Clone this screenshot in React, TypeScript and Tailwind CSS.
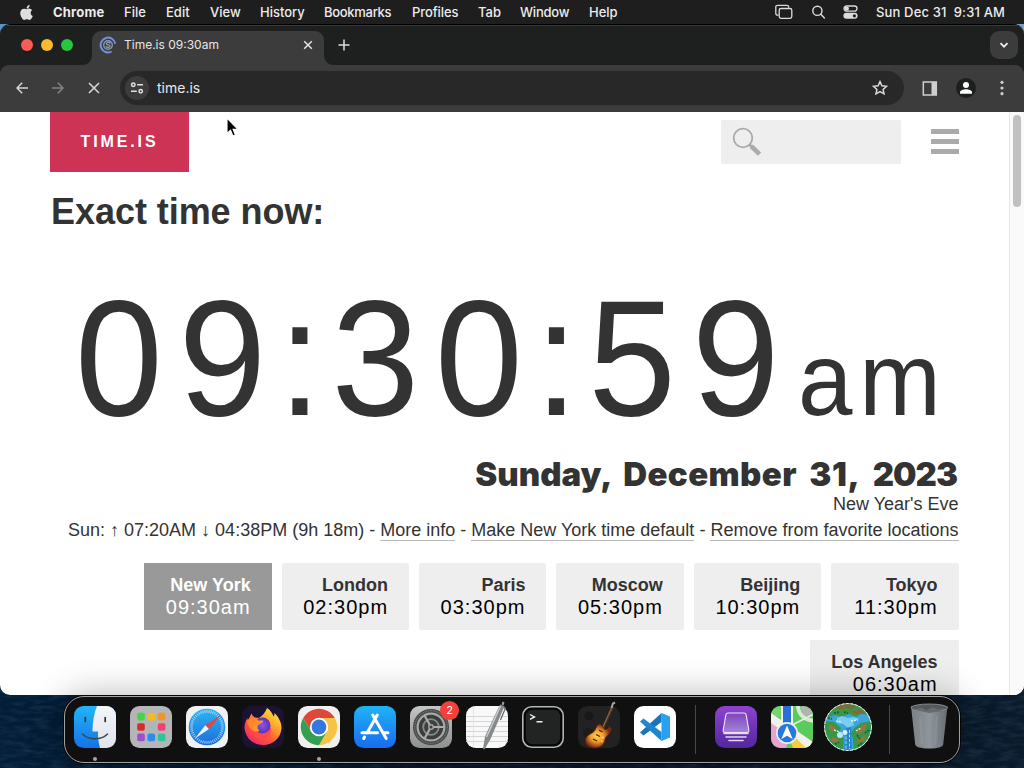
import React from "react";
import { FaApple } from "react-icons/fa";

const menuItems: { label: string; cls: string }[] = [
  { label: "Chrome", cls: "w-[71px] font-bold tracking-[0.2px]" },
  { label: "File", cls: "w-[42px] font-medium" },
  { label: "Edit", cls: "w-[44px] font-medium" },
  { label: "View", cls: "w-[50px] font-medium" },
  { label: "History", cls: "w-[64px] font-medium" },
  { label: "Bookmarks", cls: "w-[88px] font-medium tracking-[-0.3px]" },
  { label: "Profiles", cls: "w-[66px] font-medium tracking-[-0.1px]" },
  { label: "Tab", cls: "w-[42px] font-medium" },
  { label: "Window", cls: "w-[69px] font-medium tracking-[-0.2px]" },
  { label: "Help", cls: "w-[40px] font-medium" },
];

const cities = [
  { name: "London", time: "02:30pm" },
  { name: "Paris", time: "03:30pm" },
  { name: "Moscow", time: "05:30pm" },
  { name: "Beijing", time: "10:30pm" },
  { name: "Tokyo", time: "11:30pm" },
];

function MenuBar() {
  return (
    <header className="flex h-6 items-center bg-[#1e1e1e] font-['Inter',sans-serif] text-[13px] leading-6 text-[#ececec]">
      <div className="w-[53px] pl-[19px]">
        <FaApple className="h-[17px] w-[15px] text-[#dedede]" />
      </div>
      {menuItems.map((m) => (
        <div key={m.label} className={`whitespace-nowrap ${m.cls}`}>
          {m.label}
        </div>
      ))}
      <div className="ml-auto flex items-center">
        <svg className="mr-[19px] h-4 w-[18px]" viewBox="0 0 18 16" fill="none" stroke="#dcdcdc" strokeWidth="1.3">
          <path d="M3.6 11.2H2.6A1.8 1.8 0 0 1 .8 9.4V3.1a1.8 1.8 0 0 1 1.8-1.8h9.3a1.8 1.8 0 0 1 1.8 1.8v.6" />
          <rect x="4.2" y="4.5" width="12.6" height="9.8" rx="1.8" />
        </svg>
        <svg className="mr-[18px] h-[14px] w-[13px]" viewBox="0 0 13 14" fill="none" stroke="#dcdcdc" strokeWidth="1.4">
          <circle cx="5.4" cy="5.8" r="4.6" />
          <path d="M8.8 9.2l3.6 3.7" strokeLinecap="round" />
        </svg>
        <svg className="mr-[18px] h-[14px] w-[15px]" viewBox="0 0 15 14">
          <rect x="1" y="1" width="13" height="5.2" rx="2.6" fill="none" stroke="#dcdcdc" strokeWidth="1.3" />
          <circle cx="3.8" cy="3.6" r="2.2" fill="#dcdcdc" />
          <rect x=".4" y="7.8" width="14.2" height="6" rx="3" fill="#dcdcdc" />
          <circle cx="11.4" cy="10.8" r="1.6" fill="#1e1e1e" />
        </svg>
        <div className="w-[148px] whitespace-pre font-medium tracking-[0.150px]">Sun Dec 31  9:31 AM</div>
      </div>
    </header>
  );
}

function TabStrip() {
  return (
    <div className="flex h-10 items-end bg-[#1e1f1f] shadow-[inset_0_1px_0_#3a3a3a]">
      <div className="flex h-10 w-[92px] items-center gap-2 pl-[21px]">
        <span className="size-3 rounded-full bg-[#fb5a55]" />
        <span className="size-3 rounded-full bg-[#f6bb30]" />
        <span className="size-3 rounded-full bg-[#27c640]" />
      </div>
      <div className="relative flex h-[34px] w-[232px] items-center rounded-t-[9px] bg-[#3c3c3c] pb-[6px] pl-[7px]">
        <svg className="absolute bottom-0 -left-[9px] size-[9px]" viewBox="0 0 9 9">
          <path d="M9 0v9H0a9 9 0 0 0 9-9z" fill="#3c3c3c" />
        </svg>
        <svg className="absolute -right-[9px] bottom-0 size-[9px]" viewBox="0 0 9 9">
          <path d="M0 0v9h9a9 9 0 0 1-9-9z" fill="#3c3c3c" />
        </svg>
        <svg className="h-[18px] w-[18px]" viewBox="0 0 18 18" fill="none">
          <path d="M12.600 15.500A7.400 7.400 0 1 1 16.300 7.800" stroke="#6f93dc" strokeWidth="2" />
          <circle cx="9" cy="9" r="4.300" stroke="#8797b3" strokeWidth="1.400" />
          <path d="M11.500 7.300c-1-1.300-4.200-1-4.200.4 0 1.600 3.800.8 3.800 2.500 0 1.500-3.300 1.600-4.500.2" stroke="#93a0b6" strokeWidth="1.200" />
        </svg>
        <span className="ml-[7px] font-['Inter',sans-serif] text-[12px] leading-4 whitespace-nowrap text-[#e6e6e6]">Time.is 09:30am</span>
        <svg className="mr-[11px] ml-auto size-[10px]" viewBox="0 0 10 10" stroke="#e4e4e4" strokeWidth="1.5">
          <path d="M1.200 1.200l7.600 7.600M8.800 1.200L1.200 8.800" />
        </svg>
      </div>
      <svg className="mb-[14px] ml-[14px] size-3" viewBox="0 0 12 12" stroke="#dedede" strokeWidth="1.5">
        <path d="M6 .5v11M.5 6h11" />
      </svg>
      <div className="mr-[6px] mb-[6px] ml-auto flex size-7 items-center justify-center rounded-[9px] bg-[#3c3c3c]">
        <svg className="size-[10px]" viewBox="0 0 10 10" fill="none" stroke="#f0f0f0" strokeWidth="1.7">
          <path d="M1.500 3.200L5 6.700l3.500-3.500" />
        </svg>
      </div>
    </div>
  );
}

function Toolbar() {
  return (
    <div className="bg-[#1e1f1f]">
      <div className="flex h-[47px] items-center rounded-t-[9px] bg-[#3c3c3c] pb-px">
        <svg className="ml-4 size-3" viewBox="0 0 12 12" fill="none" stroke="#d6d6d6" strokeWidth="1.500">
          <path d="M12 6H1M6.200.8L1 6l5.200 5.200" />
        </svg>
        <svg className="ml-6 size-3" viewBox="0 0 12 12" fill="none" stroke="#838383" strokeWidth="1.500">
          <path d="M0 6h11M5.800.8L11 6l-5.200 5.200" />
        </svg>
        <svg className="ml-6 size-3" viewBox="0 0 12 12" fill="none" stroke="#d6d6d6" strokeWidth="1.600">
          <path d="M1 1l10 10M11 1L1 11" />
        </svg>
        <div className="ml-5 flex h-[34px] w-[784px] items-center rounded-full bg-[#282828] pl-[5px]">
          <div className="flex size-6 items-center justify-center rounded-full bg-[#3c3c3c]">
            <svg className="size-[14px]" viewBox="0 0 14 14" fill="none" stroke="#e2e2e2" strokeWidth="1.500">
              <circle cx="3.300" cy="3.800" r="1.700" />
              <path d="M7.200 3.800h5.800M1 10.200h5.800" />
              <circle cx="10.700" cy="10.200" r="1.700" />
            </svg>
          </div>
          <span className="ml-2 font-['Inter',sans-serif] text-[14px] leading-5 text-[#e8e8e8]">time.is</span>
          <svg className="mr-4 ml-auto size-4" viewBox="0 0 16 16" fill="none" stroke="#d8d8d8" strokeWidth="1.500">
            <path d="M8 1.600l1.900 4.200 4.600.5-3.400 3.100.9 4.500-4-2.300-4 2.300.9-4.500L1.500 6.300l4.600-.5z" />
          </svg>
        </div>
        <svg className="ml-[18px] h-[15px] w-4" viewBox="0 0 16 15">
          <rect x="1.300" y="1" width="13" height="13" fill="none" stroke="#cfcfcf" strokeWidth="1.500" />
          <rect x="9.500" y="1" width="5" height="13" fill="#cfcfcf" />
        </svg>
        <div className="ml-[18px] flex size-5 items-center justify-center rounded-full bg-[#1d1e1e]">
          <svg className="size-[14px]" viewBox="0 0 14 14" fill="#fff">
            <circle cx="7" cy="4" r="3" />
            <path d="M1 12.700v-1.500C1 9.300 4.500 8.300 7 8.300s6 1 6 2.900v1.500z" />
          </svg>
        </div>
        <svg className="ml-6 h-4 w-1" viewBox="0 0 4 16" fill="#d0d0d0">
          <circle cx="2" cy="2.300" r="1.600" />
          <circle cx="2" cy="8" r="1.600" />
          <circle cx="2" cy="13.700" r="1.600" />
        </svg>
      </div>
    </div>
  );
}

function CityCard({ name, time, active, wide }: { name: string; time: string; active?: boolean; wide?: boolean }) {
  return (
    <div
      className={`h-[67px] pt-[11px] pr-[21px] text-right ${wide ? "w-[149px]" : "w-[127.400px]"} ${
        active ? "bg-[#999] text-white" : "rounded-[2px] bg-[#eee] text-black"
      }`}
    >
      <div className={`text-[18px] leading-[22px] font-bold ${active ? "text-white" : "text-[#333]"}`}>{name}</div>
      <div className="text-[20px] leading-[22px] tracking-[1px]">{time}</div>
    </div>
  );
}

function Page() {
  return (
    <div className="flex h-[583px] overflow-hidden rounded-b-[10px] bg-white">
      <main className="w-[1009px] pr-[50px] pl-[50px] font-['Liberation_Sans',Arial,sans-serif] text-[#333]">
        <div className="flex h-[60px] items-start">
          <div className="flex h-[60px] w-[139px] items-center justify-center bg-[#cc3355] text-[16px] font-bold tracking-[2.900px] text-white">
            TIME.IS
          </div>
          <div className="mt-2 ml-auto h-11 w-[180px] rounded-[2px] bg-[#eee] pt-[7px] pl-[11px]">
            <svg className="size-[30px]" viewBox="0 0 30 30" fill="none" stroke="#aaa">
              <circle cx="11" cy="11" r="9.300" strokeWidth="1.800" />
              <path d="M17.500 17.500l2.500 2.500" strokeWidth="2.500" />
              <path d="M19.300 19.300l8.300 7.800" strokeWidth="4.600" />
            </svg>
          </div>
          <div className="mt-[17px] ml-[30px] flex w-7 flex-col gap-[5px]">
            <span className="h-[5px] bg-[#aaa]" />
            <span className="h-[5px] bg-[#aaa]" />
            <span className="h-[5px] bg-[#aaa]" />
          </div>
        </div>
        <h1 className="mt-[18px] h-[44px] pl-px text-[36px] leading-[44px] font-bold tracking-[-0.050px]">Exact time now:</h1>
        <div className="mt-[24px] h-[199px] pl-[25px]">
          <div className="origin-left scale-x-[0.95] text-[166px] leading-[200px] tracking-[16.650px] whitespace-nowrap">
            0<span className="tracking-[12.300px]">9</span>
            <span className="tracking-[10.350px]">:</span>3<span className="tracking-[12.300px]">0</span>
            <span className="tracking-[10.350px]">:</span>59
            <span className="ml-[3px] text-[103px] tracking-[7px]">am</span>
          </div>
        </div>
        <div className="text-right">
          <div className="h-[34px] pr-[2px] font-['Inter',sans-serif] text-[33px] leading-[34px] font-black [word-spacing:5.800px] whitespace-nowrap">
            Sunday, <span className="tracking-[0.400px]">December</span> <span className="tracking-[0.600px]">31,</span>{" "}
            <span className="tracking-[-1px]">2023</span>
          </div>
          <div className="h-[26px] pr-[0.500px] text-[18px] leading-[26px]">New Year's Eve</div>
          <div className="h-[26px] text-[18px] leading-[26px] whitespace-nowrap">
            Sun: ↑ 07:20AM ↓ 04:38PM (9h 18m) - <a className="border-b border-[#bbb]">More info</a> -{" "}
            <a className="border-b border-[#bbb]">Make New York time default</a> -{" "}
            <a className="border-b border-[#bbb] pr-[0.500px]">Remove from favorite locations</a>
          </div>
        </div>
        <div className="mt-5 flex flex-wrap justify-end gap-[10px] pr-[0.400px]">
          <CityCard name="New York" time="09:30am" active />
          {cities.map((c) => (
            <CityCard key={c.name} name={c.name} time={c.time} />
          ))}
          <CityCard name="Los Angeles" time="06:30am" wide />
        </div>
      </main>
      <div className="w-[15px] border-l border-[#e8e8e8] bg-[#fafafa] pt-[3px] pl-[3px]">
        <div className="h-[92px] w-2 rounded-full bg-[#c1c1c1]" />
      </div>
    </div>
  );
}

function Tile({ children, dot }: { children: React.ReactNode; dot?: boolean }) {
  return (
    <div className="flex w-[42px] flex-col items-center">
      <svg className="size-[42px] shrink-0 overflow-visible" viewBox="0 0 42 42">
        {children}
      </svg>
      {dot && <span className="mt-[9px] size-1 rounded-full bg-[#a5a5a5]" />}
    </div>
  );
}

const launchColors = ["#45d443", "#f3b926", "#ee952b", "#d92b2b", "#a9b8b2", "#ee4372", "#9c4fd0", "#2e8bea", "#30c49b"];
const safariTicks = Array.from({ length: 48 }, (_, i) => i * 7.5);

function Gradients() {
  return (
    <svg className="absolute size-0">
      <defs>
        <linearGradient id="finder" x2="0" y2="1">
          <stop stopColor="#23b5f8" />
          <stop offset="1" stopColor="#1473e8" />
        </linearGradient>
        <linearGradient id="finderLight" x2="0" y2="1">
          <stop stopColor="#f4f5f8" />
          <stop offset="1" stopColor="#dfe3ec" />
        </linearGradient>
        <linearGradient id="safari" x2="0" y2="1">
          <stop stopColor="#2fb4f2" />
          <stop offset="1" stopColor="#1d6edb" />
        </linearGradient>
        <linearGradient id="foxBody" x1="1" y1="0" x2=".2" y2="1">
          <stop stopColor="#fff04e" />
          <stop offset=".35" stopColor="#ffb12e" />
          <stop offset=".65" stopColor="#ff5a35" />
          <stop offset="1" stopColor="#f0246c" />
        </linearGradient>
        <linearGradient id="foxHead" x2="1" y2="1">
          <stop stopColor="#ff7a2a" />
          <stop offset="1" stopColor="#ffa32e" />
        </linearGradient>
        <radialGradient id="foxGlobe">
          <stop stopColor="#8b52f0" />
          <stop offset="1" stopColor="#5a33b8" />
        </radialGradient>
        <linearGradient id="store" x2="0" y2="1">
          <stop stopColor="#1fb4f8" />
          <stop offset="1" stopColor="#1a6bec" />
        </linearGradient>
        <linearGradient id="prefs" x2="0" y2="1">
          <stop stopColor="#c4c6c4" />
          <stop offset="1" stopColor="#8e908e" />
        </linearGradient>
        <linearGradient id="purple" x2="0" y2="1">
          <stop stopColor="#8d43d0" />
          <stop offset="1" stopColor="#51289e" />
        </linearGradient>
        <linearGradient id="drive" x2="0" y2="1">
          <stop stopColor="#7d45bb" />
          <stop offset="1" stopColor="#a585da" />
        </linearGradient>
        <radialGradient id="guitar" cx=".45" cy=".5">
          <stop stopColor="#ffd84e" />
          <stop offset=".5" stopColor="#f39a2c" />
          <stop offset="1" stopColor="#7c2a10" />
        </radialGradient>
        <linearGradient id="bin" x2="1" y2="0">
          <stop stopColor="#7b8185" />
          <stop offset=".5" stopColor="#8e959b" />
          <stop offset="1" stopColor="#666c71" />
        </linearGradient>
        <clipPath id="tileClip">
          <rect width="42" height="42" rx="9.500" />
        </clipPath>
        <clipPath id="globeClip">
          <circle cx="21" cy="21" r="23" />
        </clipPath>
      </defs>
    </svg>
  );
}

function Dock() {
  return (
    <div className="absolute top-[696px] left-[64px] flex h-[67px] w-[896px] gap-[14px] rounded-[20px] border border-[#a2a2a2] bg-[#101010] pt-[9px] pl-[9px] shadow-[0_0_0_1px_#050505,0_0_36px_rgba(0,0,0,0.3)]">
      <Gradients />
      <Tile dot>
        <rect width="42" height="42" rx="9.500" fill="url(#finder)" />
        <path d="M23 0h9.500a9.500 9.500 0 0 1 9.500 9.500v23a9.500 9.500 0 0 1-9.500 9.500H26c-1.500-5-2.200-11-2-16.500h-5.500C18.500 16 20 7.500 23 0z" fill="url(#finderLight)" />
        <path d="M11.300 11.500v4M31.200 11.500v4" stroke="#24323f" strokeWidth="1.700" strokeLinecap="round" />
        <path d="M8.500 28c6.500 6.500 18.500 6.500 25 0" fill="none" stroke="#394b50" strokeWidth="1.600" strokeLinecap="round" />
      </Tile>
      <Tile>
        <rect width="42" height="42" rx="9.500" fill="#b5b4b7" />
        {launchColors.map((c, i) => (
          <rect key={c} x={7.2 + (i % 3) * 10.3} y={6.8 + Math.floor(i / 3) * 10.4} width="7.600" height="7.600" rx="1.800" fill={c} />
        ))}
      </Tile>
      <Tile>
        <rect width="42" height="42" rx="9.500" fill="#f0f1f2" />
        <circle cx="21" cy="21" r="18.300" fill="url(#safari)" />
        {safariTicks.map((a) => (
          <path key={a} d="M21 4.200v2.600" stroke="#d9ecfb" strokeWidth=".7" transform={`rotate(${a} 21 21)`} />
        ))}
        <path d="M35 9L19.300 19.200l3.600 3.800z" fill="#e8433f" />
        <path d="M9 32.500L19.300 19.200l3.600 3.800z" fill="#f1f3f5" />
      </Tile>
      <Tile>
        <rect width="42" height="42" rx="9.500" fill="#1c1232" />
        <path
          d="M25 2c3.500 2 5.500 5.500 6.500 8.500 1-.8 1-2 .8-3.500C37 11 39.500 17 39.500 22 39 32 31 39 21 39S3 31.500 2.500 21.500c0-4 1.500-7 2.800-9.500.2 1.200.4 2 .9 2.600C7 12 8.500 9 9.500 7.500 11 11 13 12 17 12c3-2 6-5 8-10z"
          fill="url(#foxBody)"
        />
        <circle cx="20.500" cy="19.500" r="8" fill="url(#foxGlobe)" />
        <path d="M5 15C8 10 15 11.500 16 14.500h5.500c-.4 2.200-3 3-4.700 4.200-1.800 1.300-1.800 3.800.7 6.300-4 2-11-1-12.500-10z" fill="url(#foxHead)" />
        <path d="M8 22c2 6 9 8 14 5.500 4-1 6-3.500 6.500-6.500 2 5-1 11-7 12S9 29 8 22z" fill="#ff4a48" />
      </Tile>
      <Tile dot>
        <rect width="42" height="42" rx="9.500" fill="#f1f0ee" />
        <path d="M21 11.900h15.760A18.200 18.200 0 0 0 5.240 11.900L13.100 25.500z" fill="#df4738" />
        <path d="M28.900 25.500L21 39.200A18.200 18.200 0 0 0 36.760 11.900H21z" fill="#f6c343" />
        <path d="M13.100 25.500L5.240 11.900A18.200 18.200 0 0 0 21 39.200l7.900-13.700z" fill="#34a052" />
        <circle cx="21" cy="21" r="9.200" fill="#fff" />
        <circle cx="21" cy="21" r="7.400" fill="#3577de" />
      </Tile>
      <Tile>
        <rect width="42" height="42" rx="9.500" fill="url(#store)" />
        <g stroke="#fff" strokeWidth="3" strokeLinecap="round">
          <path d="M23.300 9L13 27M10.500 31l-.8 1.500M18.700 9l13.500 23.500M8 26.800h15.500M28.800 26.800H34" />
        </g>
      </Tile>
      <div className="relative">
        <Tile>
          <rect width="42" height="42" rx="9.500" fill="url(#prefs)" />
          <circle cx="21" cy="21" r="18" fill="#454847" />
          <circle cx="21" cy="21" r="16.300" fill="none" stroke="#777b79" strokeWidth="1.200" strokeDasharray="1 .7" />
          <circle cx="21" cy="21" r="13.400" fill="#3a3d3c" stroke="#a5a8a6" strokeWidth="2.200" />
          <circle cx="21" cy="21" r="7.800" fill="#3d403f" stroke="#868a88" strokeWidth="1.800" />
          <path d="M21 21L14.500 9.500M21 21h13.200M21 21l-6.500 11.500" stroke="#a9adab" strokeWidth="2.200" />
          <circle cx="21" cy="21" r="3" fill="#a0a4a2" />
          <circle cx="21" cy="21" r="1.500" fill="#3b3e3d" />
        </Tile>
        <span className="absolute -top-[5px] -right-[7px] flex size-[19px] items-center justify-center rounded-full bg-[#f2413c] font-['Inter',sans-serif] text-[11px] leading-none text-white">2</span>
      </div>
      <Tile>
        <rect width="42" height="42" rx="9.500" fill="#f8f8f8" />
        <path d="M0 10.500h42M0 15.500h42M0 20.500h42M0 25.500h42M0 30.500h42M0 35.500h42" stroke="#cbcccd" strokeWidth=".8" />
        <path d="M7.500 0v42" stroke="#dedede" strokeWidth=".7" />
        <path d="M34 -1.500l4.500 1.700L24.500 33l-6 10.500-1.500-1 2.200-12.500z" fill="#85898b" />
        <path d="M34.500 0L20.500 31" stroke="#c9cccd" strokeWidth="1.500" />
        <path d="M35.500 -1.500l1-3 2 .8-1 3.200z" fill="#9b9fa1" />
        <path d="M38 1l1.500 1-5 12" fill="none" stroke="#5f6365" strokeWidth="1.200" />
      </Tile>
      <Tile>
        <rect x=".8" y=".8" width="40.400" height="40.400" rx="9" fill="#050505" stroke="#b4b6b6" strokeWidth="1.600" />
        <rect x="3.800" y="3.800" width="34.400" height="34.400" rx="6.500" fill="#212423" />
        <path d="M8 8.500l4.500 2.400L8 13.300M14.500 15.800h6" fill="none" stroke="#f0f0f0" strokeWidth="1.400" />
      </Tile>
      <Tile>
        <rect width="42" height="42" rx="9.500" fill="#222" />
        <circle cx="11" cy="10" r="4.500" fill="#191919" />
        <circle cx="10" cy="27" r="5" fill="#1b1b1b" />
        <path d="M24 24L34.500 1" stroke="#54301f" strokeWidth="2.800" />
        <path d="M33.500 2l1.500-4.500 2-1" fill="none" stroke="#aaa39b" strokeWidth="2" />
        <path d="M24.500 22L33.500 2" stroke="#ac8d70" strokeWidth=".7" />
        <path d="M20 18.500c-2 1.500-2 5-4 7-2.500 2.500-7.500 3-8.500 8-1 5 3.500 8.500 9 8.500 7 0 10-4 10.500-8.500.5-3.500 4.500-4.500 6-8.500 1-3-.5-4.500-2-4.500 0 2-3 3.500-4.500 2.500-2-1.500-3.500-6.500-6.500-4.500z" fill="url(#guitar)" stroke="#571c0c" strokeWidth=".8" />
        <path d="M15 33l4 2M18 28.500l4 2M21 24l3.500 2" stroke="#452010" strokeWidth="1.300" />
        <path d="M24 31l1.500 1M23 35l1.500.5" stroke="#fff0aa" strokeWidth="1.200" />
      </Tile>
      <Tile>
        <rect width="42" height="42" rx="9.500" fill="#fff" />
        <path d="M27.500 7L36 10.500v21L27.500 35z" fill="#28a0ef" />
        <path d="M27.500 7v9L9.500 29.500 6 26.500z" fill="#1c72bb" />
        <path d="M27.500 35v-9L9.500 12.500 6 15.500z" fill="#1b87d1" />
      </Tile>
      <div className="-mt-px mr-[5px] ml-[5px] h-[49px] w-px bg-[#484848]" />
      <Tile>
        <rect width="42" height="42" rx="9.500" fill="url(#purple)" />
        <path d="M13 7h16c1.200 0 1.900.6 2.100 1.600l2.700 15.600c.2 1.500-.5 2.300-1.800 2.300H10c-1.300 0-2-.8-1.800-2.300l2.700-15.600C11.100 7.600 11.800 7 13 7z" fill="url(#drive)" stroke="#eee6f5" strokeWidth="1.100" />
        <path d="M9 27.500h24M11 31h20M14 34.500h14" stroke="#e6d8f3" strokeWidth="1.500" strokeLinecap="round" />
      </Tile>
      <Tile>
        <g clipPath="url(#tileClip)">
          <rect width="42" height="42" fill="#5bcb5d" />
          <path d="M0 0h11v12L0 8z" fill="#73d66d" />
          <path d="M0 15l20 14-5 13H0z" fill="#e6a5d0" />
          <path d="M18 32l24 10H22z" fill="#f8cc3b" />
          <path d="M0 7l42 29v6h-7L0 17z" fill="#f1f1e9" />
          <path d="M24 31l11 11H23z" fill="#f8cc3b" />
          <path d="M10 0h12v24H10z" fill="#f4f5ef" />
          <path d="M12 0h8v24h-8z" fill="#2770d8" />
          <path d="M27-1c0 9 6 15 17 16" fill="none" stroke="#dce5d7" strokeWidth="4" />
          <circle cx="37" cy="3" r="7" fill="#aeb7ad" />
          <path d="M21 19L43 8" stroke="#e3eddf" strokeWidth="1.600" />
        </g>
        <circle cx="16" cy="27" r="11" fill="#e9f1f4" />
        <circle cx="16" cy="27" r="9.300" fill="#2678dd" />
        <path d="M16 19.500l5.800 13.700L16 29.800l-5.800 3.400z" fill="#fff" />
      </Tile>
      <Tile>
        <circle cx="21" cy="21" r="23.700" fill="#d8f0de" />
        <g clipPath="url(#globeClip)">
          <rect x="-3" y="-3" width="48" height="48" fill="#3da4dc" />
          <path d="M0-3h42l2 12-10-1-5 3-7-3-8 3-6-2-9 3z" fill="#3b9649" />
          <path d="M9 0l10-2 10 2-4 3-6-1-7 2zM24 6l9-3 5 4-9 1z" fill="#8a6534" />
          <path d="M-3 15l10 1 7 6-2 5 5 5-1 14H6l-9-12z" fill="#37964a" />
          <path d="M45 15l-11 2-7 5-3 5 2 6 1 13h12l9-12z" fill="#37964a" />
          <path d="M2 18l6 3 1 5-7-2zM35 19l5-1-2 6-6 5-2-3zM4 31l8 2-1 4-6-2zM31 32l8-2-2 5-7 2z" fill="#9c743d" />
          <path d="M10 12l5-2 6 2 6-1 5 2-6 3 1 3-6 3-5-4-6-1z" fill="#79cdf1" />
          <path d="M19 22l5-1 1 25h-8z" fill="#2783cc" />
          <path d="M19 26v17M22.500 24v19" stroke="#9be1f8" strokeWidth="1" strokeDasharray="3 1.500" />
          <circle cx="13" cy="29" r="3" fill="#b9e9f7" />
          <circle cx="18" cy="26.500" r="2.400" fill="#d5f4fb" />
          <path d="M7 24l6 2M24 15l7-1M9 15l6 1M29 25l5-3" stroke="#cdf3fb" strokeWidth="1.400" strokeDasharray="2 1" />
          <path d="M1 12l4 1M7 7l6-1M17 6l4 1M30 29l3 4M8 38l4-2M35 37l-4 3M38 27l4-3" stroke="#1d6632" strokeWidth="2" strokeDasharray="2 1" />
        </g>
        <circle cx="21" cy="21" r="23.500" fill="none" stroke="#d8f0de" strokeWidth="1" strokeDasharray="3 1.500" />
      </Tile>
      <div className="-mt-px mr-[4px] ml-[6px] h-[49px] w-px bg-[#484848]" />
      <Tile>
        <path d="M3 0h36.500l-4.300 38.500c-.4 2.400-5 4-14 4s-13.600-1.600-14-4z" fill="url(#bin)" />
        <ellipse cx="21.300" cy="1.800" rx="18.200" ry="3.800" fill="#54585a" stroke="#8c9193" strokeWidth=".9" />
        <path d="M5.500 3.500l8-2 5 3 6-3.500 6 2.500 6-1.500-4 3.500-12 1.500z" fill="#676c6f" />
        <path d="M12 11l2 27M29 10l-2 29" stroke="#9aa2a8" strokeOpacity=".35" strokeWidth="2" />
      </Tile>
    </div>
  );
}

export default function App() {
  return (
    <div className="relative h-[768px] w-[1024px] overflow-hidden bg-linear-to-r from-[#031d38] via-[#071526] to-[#0a1a2b]">
      <svg className="absolute top-[690px] left-0 h-[78px] w-[1024px]" viewBox="0 0 1024 78">
        <filter id="waves" x="0" y="0" width="100%" height="100%">
          <feTurbulence type="fractalNoise" baseFrequency=".06 .25" numOctaves="3" seed="4" />
          <feColorMatrix values="0 0 0 0 .07  0 0 0 0 .17  0 0 0 0 .27  .45 0 0 0 -.18" />
        </filter>
        <rect width="1024" height="78" filter="url(#waves)" />
      </svg>
      <div className="relative">
        <MenuBar />
        <div className="bg-linear-to-r from-[#5b93c4] via-[#111] to-[#7d9dc4]">
          <div className="overflow-hidden rounded-t-[10px] border-t border-black bg-[#1e1f1f]">
            <TabStrip />
          </div>
        </div>
        <Toolbar />
        <Page />
      </div>
      <Dock />
      <svg className="absolute top-[116px] left-[224px] h-[23px] w-[17px]" viewBox="0 0 15 21">
        <path d="M2.500 2v14l3.200-3 2.200 5.300 2.300-1L8 12.200h4.500z" fill="#000" stroke="#fff" strokeWidth="1" />
      </svg>
    </div>
  );
}
